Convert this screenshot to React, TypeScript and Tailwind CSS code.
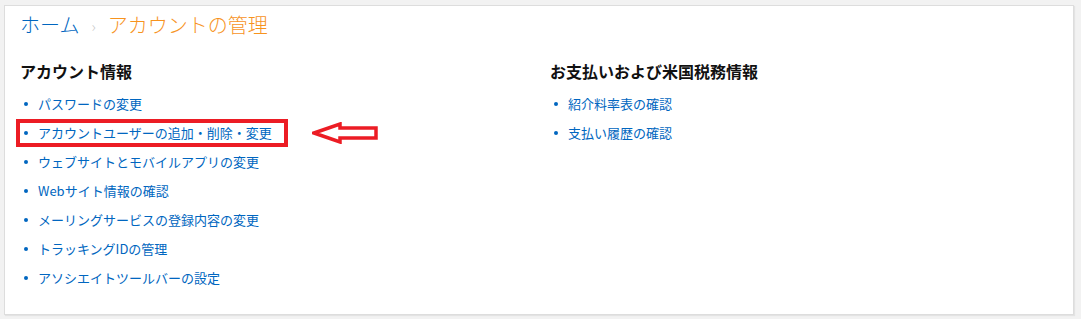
import React from 'react';

const accountLinks = [
  'パスワードの変更',
  'アカウントユーザーの追加・削除・変更',
  'ウェブサイトとモバイルアプリの変更',
  'Webサイト情報の確認',
  'メーリングサービスの登録内容の変更',
  'トラッキングIDの管理',
  'アソシエイトツールバーの設定',
];

const paymentLinks = ['紹介料率表の確認', '支払い履歴の確認'];

const LinkItem = ({ label, marked }: { label: string; marked?: boolean }) => (
  <li className="h-[29px] flex items-center">
    <div
      className={
        marked
          ? 'flex items-center h-[28px] -ml-[4px] pr-[12px] border-[4px] border-[#ec1c24]'
          : 'flex items-center'
      }
    >
      <span className="w-[4px] h-[4px] rounded-full bg-[#0066c0] ml-[4px] mr-[10px]" />
      <a className="text-[13px] text-[#0066c0] leading-none">{label}</a>
    </div>
  </li>
);

const Arrow = () => (
  <svg width="68" height="22" viewBox="0 0 68 22" className="ml-[24px]">
    <path
      d="M2 11 L28 2 L28 6 L64 6 L64 16 L28 16 L28 20 Z"
      fill="none"
      stroke="#ec1c24"
      strokeWidth="3.5"
      strokeLinejoin="miter"
    />
  </svg>
);

export default function App() {
  return (
    <div
      className="w-[1081px] h-[319px] bg-[#f2f2f2] pt-[5px] pl-[4px]"
      style={{ fontFamily: '"Noto Sans CJK JP", "Noto Sans", sans-serif' }}
    >
      <div className="w-[1070px] h-[310px] bg-white border border-[#dddddd] shadow-[1px_1px_1px_rgba(0,0,0,0.06)] px-[15px]">
        <div className="flex items-center h-[38px] text-[20px] leading-none font-light">
          <a className="text-[#0066c0]">ホーム</a>
          <span className="text-[#c8c8c8] text-[15px] mx-[12px]">›</span>
          <span className="text-[#f7931e]">アカウントの管理</span>
        </div>
        <div className="grid grid-cols-[530px_1fr] mt-[19px]">
          <div>
            <h2 className="text-[16px] font-bold text-[#111] leading-none h-[18px]">アカウント情報</h2>
            <ul className="mt-[8px]">
              {accountLinks.map((l, i) =>
                i === 1 ? (
                  <div key={l} className="flex items-center">
                    <LinkItem label={l} marked />
                    <Arrow />
                  </div>
                ) : (
                  <LinkItem key={l} label={l} />
                )
              )}
            </ul>
          </div>
          <div>
            <h2 className="text-[16px] font-bold text-[#111] leading-none h-[18px]">お支払いおよび米国税務情報</h2>
            <ul className="mt-[8px]">
              {paymentLinks.map((l) => (
                <LinkItem key={l} label={l} />
              ))}
            </ul>
          </div>
        </div>
      </div>
    </div>
  );
}
